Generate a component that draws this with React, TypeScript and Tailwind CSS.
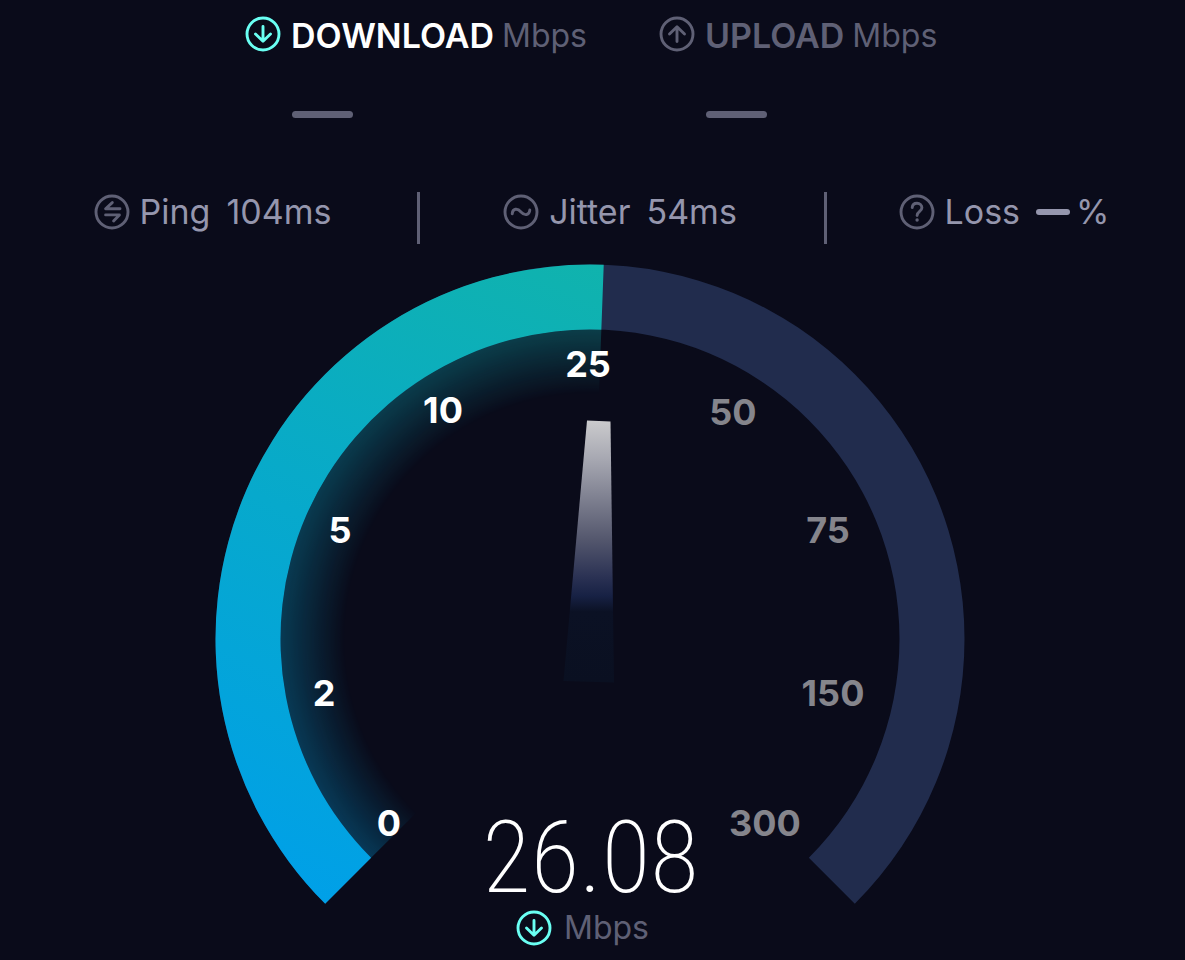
import type { ReactNode } from "react";

type IconName = "down" | "up" | "ping" | "jitter" | "loss";

const ICON_SHAPES: Record<IconName, ReactNode> = {
  down: <path d="M18 10.5V25M10.5 18L18 25.3L25.5 18" />,
  up: <path d="M18 25.5V11M10.5 18L18 10.7L25.5 18" />,
  ping: <path d="M18.3 8.6L11.6 14.7H26M11.6 20.9H25.4L19.6 27" />,
  jitter: <path d="M9.2 19.8C9.6 14.4 14.4 13.8 18 18C21.6 22 26.4 21.4 26.8 16" />,
  loss: (
    <>
      <path d="M13.2 13.6C13.4 10.8 15.4 9.3 18 9.3C20.8 9.3 22.9 11.1 22.9 13.7C22.9 17.3 18.1 17.4 18.1 21.5" />
      <circle cx="18.1" cy="26" r="1.7" fill="currentColor" stroke="none" />
    </>
  ),
};

function RoundIcon({ name, className }: { name: IconName; className: string }) {
  return (
    <svg
      viewBox="0 0 36 36"
      className={`h-9 w-9 shrink-0 ${className}`}
      fill="none"
      stroke="currentColor"
      strokeWidth="2.9"
      strokeLinecap="round"
      strokeLinejoin="round"
      aria-hidden="true"
    >
      <circle cx="18" cy="18" r="16" />
      {ICON_SHAPES[name]}
    </svg>
  );
}

function SpeedHeading({
  icon,
  label,
  active,
}: {
  icon: IconName;
  label: string;
  active?: boolean;
}) {
  return (
    <div className={active ? "w-[347px]" : "w-[281px]"}>
      <div className="flex items-center">
        <RoundIcon name={icon} className={active ? "text-[#6afff3]" : "text-[#5f6075]"} />
        <h2
          className={`ml-2.5 pt-1 text-[34px] leading-9 font-semibold ${
            active ? "text-white" : "text-[#5f6075]"
          }`}
        >
          {label}
        </h2>
        <span className="ml-2 pt-1 text-[32px] leading-9 font-normal text-[#5f6075]">Mbps</span>
      </div>
      <div className="mt-[57px] ml-[47px] h-[7px] w-[61px] rounded-full bg-[#5f6075]" />
    </div>
  );
}

function Stat({ icon, label, children }: { icon: IconName; label: string; children: ReactNode }) {
  return (
    <div className="flex items-center justify-center pt-0.5 text-[34px] leading-9 font-normal text-[#9596ad]">
      <RoundIcon name={icon} className="text-[#5f6075]" />
      <span className="ml-2.5">{label}</span>
      <span className="ml-4 flex items-center">{children}</span>
    </div>
  );
}

const TICKS = [
  { value: 0, x: -201, y: 184 },
  { value: 2, x: -266, y: 54 },
  { value: 5, x: -250, y: -109 },
  { value: 10, x: -147, y: -229 },
  { value: 25, x: -2, y: -275 },
  { value: 50, x: 143, y: -227 },
  { value: 75, x: 238, y: -109 },
  { value: 150, x: 243, y: 54 },
  { value: 300, x: 175, y: 184 },
];

const OUTER = 374.5;
const INNER = 309.5;
const SPEED = 26.08;
// degrees clockwise from twelve o'clock
const SPEED_ANGLE = 2.1;

function sector(from: number, to: number, outer: number, inner: number) {
  const point = (deg: number, r: number) => {
    const a = (deg * Math.PI) / 180;
    return `${r * Math.sin(a)} ${-r * Math.cos(a)}`;
  };
  const large = to - from > 180 ? 1 : 0;
  return [
    `M${point(from, outer)}`,
    `A${outer} ${outer} 0 ${large} 1 ${point(to, outer)}`,
    `L${point(to, inner)}`,
    `A${inner} ${inner} 0 ${large} 0 ${point(from, inner)}Z`,
  ].join("");
}

function Gauge() {
  return (
    <svg viewBox="-375 -375 755 696" className="block w-full" role="img" aria-label="Speed gauge">
      <defs>
        <linearGradient id="fill" gradientUnits="userSpaceOnUse" x1="-265" y1="265" x2="10" y2="-375">
          <stop offset="0" stopColor="#00a0e8" />
          <stop offset="0.5" stopColor="#07a9cc" />
          <stop offset="1" stopColor="#10b3ad" />
        </linearGradient>
        <radialGradient id="fade" gradientUnits="userSpaceOnUse" cx="0" cy="0" r="310">
          <stop offset="0.79" stopColor="#fff" stopOpacity="0" />
          <stop offset="0.88" stopColor="#fff" stopOpacity="0.13" />
          <stop offset="1" stopColor="#fff" stopOpacity="0.31" />
        </radialGradient>
        <mask id="glow" maskUnits="userSpaceOnUse" x="-375" y="-375" width="755" height="696">
          <circle r="310" fill="url(#fade)" />
        </mask>
        <linearGradient id="needle" x1="0" y1="0" x2="0" y2="1">
          <stop offset="0" stopColor="#cbcbcd" />
          <stop offset="0.15" stopColor="#a6a7b1" />
          <stop offset="0.45" stopColor="#55586e" />
          <stop offset="0.6" stopColor="#2a3153" />
          <stop offset="0.67" stopColor="#172144" />
          <stop offset="0.73" stopColor="#0b1124" />
          <stop offset="1" stopColor="#0a1021" />
        </linearGradient>
      </defs>
      <path d={sector(-135, 135, OUTER, INNER)} fill="#212c4d" />
      <path d={sector(-135, SPEED_ANGLE, OUTER, INNER)} fill="url(#fill)" />
      <path d={sector(-135, SPEED_ANGLE, INNER, 240)} fill="url(#fill)" mask="url(#glow)" />
      <path d="M-3 -218.5L20.5 -217.5L24 43.5L-26.5 42Z" fill="url(#needle)" />
      {TICKS.map((t) => (
        <text
          key={t.value}
          x={t.x}
          y={t.y + 13}
          textAnchor="middle"
          className={`text-[36px] font-bold ${
            t.value <= SPEED ? "fill-white" : "fill-[#85858c]"
          }`}
        >
          {t.value}
        </text>
      ))}
    </svg>
  );
}

export default function App() {
  return (
    <main className="min-h-screen bg-[#0a0b1a] font-['Inter',sans-serif]">
      <header className="flex justify-center gap-[67px] pt-3.5">
        <SpeedHeading icon="down" label="DOWNLOAD" active />
        <SpeedHeading icon="up" label="UPLOAD" />
      </header>

      <section className="mt-[74px] grid h-[52px] grid-cols-[420fr_407fr_358fr] divide-x-3 divide-[#5f6075]">
        <div className="pl-2">
          <Stat icon="ping" label="Ping">
            104ms
          </Stat>
        </div>
        <div className="pr-1">
          <Stat icon="jitter" label="Jitter">
            54ms
          </Stat>
        </div>
        <div className="pr-1">
          <Stat icon="loss" label="Loss">
            <span className="mr-1.5 h-[6px] w-[34px] rounded-full bg-[#9596ad]" />%
          </Stat>
        </div>
      </section>

      <section className="relative mx-auto mt-5 w-full max-w-[755px]">
        <Gauge />
        <div className="absolute inset-x-0 bottom-3.5 flex flex-col items-center pr-1">
          <output className="mb-1 font-['Roboto_Condensed','Liberation_Sans_Narrow',Roboto,sans-serif] text-[100px] leading-24 font-extralight text-white">
            {SPEED}
          </output>
          <div className="mr-4 flex items-center">
            <RoundIcon name="down" className="text-[#6afff3]" />
            <span className="ml-3 text-[32px] leading-9 font-normal text-[#5f6075]">Mbps</span>
          </div>
        </div>
      </section>
    </main>
  );
}
